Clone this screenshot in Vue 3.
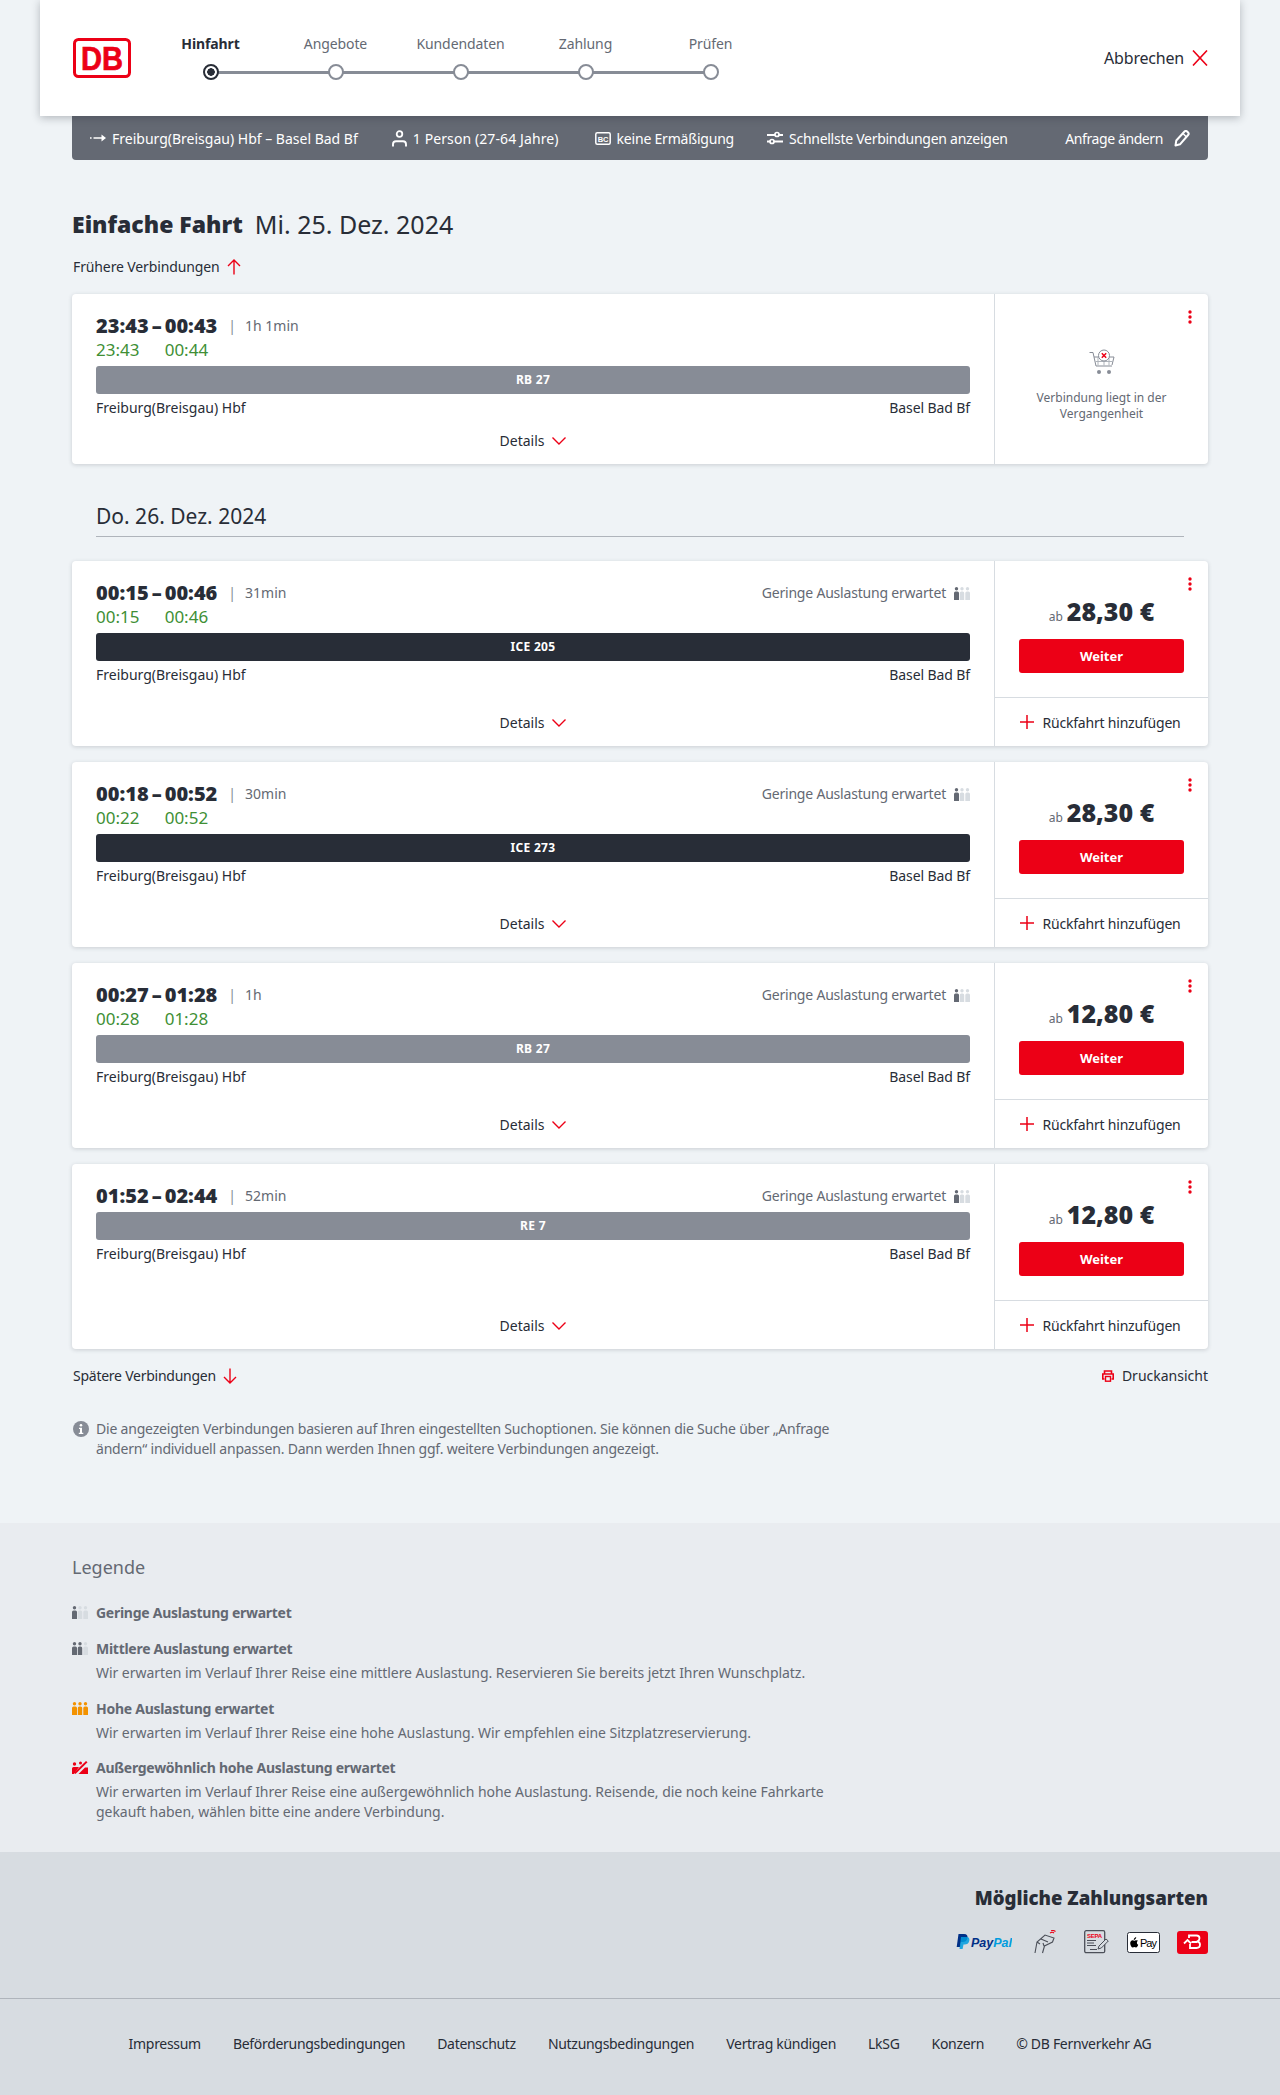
<script setup>
const steps = ['Hinfahrt', 'Angebote', 'Kundendaten', 'Zahlung', 'Prüfen']
const journeys = [
  { dep: '00:15', arr: '00:46', dur: '31min', rtDep: '00:15', rtArr: '00:46', train: 'ICE 205', dark: true, price: '28,30 €' },
  { dep: '00:18', arr: '00:52', dur: '30min', rtDep: '00:22', rtArr: '00:52', train: 'ICE 273', dark: true, price: '28,30 €' },
  { dep: '00:27', arr: '01:28', dur: '1h', rtDep: '00:28', rtArr: '01:28', train: 'RB 27', dark: false, price: '12,80 €' },
  { dep: '01:52', arr: '02:44', dur: '52min', train: 'RE 7', dark: false, price: '12,80 €' }
]
const legend = [
  { title: 'Mittlere Auslastung erwartet', level: 2, text: ['Wir erwarten im Verlauf Ihrer Reise eine mittlere Auslastung. Reservieren Sie bereits jetzt Ihren Wunschplatz.'] },
  { title: 'Hohe Auslastung erwartet', level: 3, text: ['Wir erwarten im Verlauf Ihrer Reise eine hohe Auslastung. Wir empfehlen eine Sitzplatzreservierung.'] }
]
const links = ['Impressum', 'Beförderungsbedingungen', 'Datenschutz', 'Nutzungsbedingungen', 'Vertrag kündigen', 'LkSG', 'Konzern', '© DB Fernverkehr AG']
</script>

<template>
  <div class="page">
    <header class="top">
      <svg class="logo" width="58" height="40" viewBox="0 0 58 40">
        <rect x="1.500" y="1.500" width="55" height="37" rx="4" fill="#fff" stroke="#ec0016" stroke-width="3" />
        <text x="8" y="31.500" font-family="Liberation Sans, sans-serif" font-weight="700" font-size="34" fill="#ec0016" stroke="#ec0016" stroke-width=".7" textLength="42" lengthAdjust="spacingAndGlyphs">DB</text>
      </svg>
      <ol class="steps">
        <li v-for="(s, i) in steps" :key="s" class="step" :class="{ active: i === 0 }">
          <span class="step-label">{{ s }}</span>
          <span class="dot"></span>
        </li>
      </ol>
      <a class="cancel">
        <span>Abbrechen</span>
        <svg width="16" height="16" viewBox="0 0 16 16"><path d="M1 0.500 15 15.500M15 0.500 1 15.500" stroke="#ec0016" stroke-width="1.600" fill="none" /></svg>
      </a>
    </header>

    <div class="summary">
      <span class="s-item s-route">
        <svg width="16" height="10" viewBox="0 0 16 10"><path d="M0 5h1.600M3.500 5h9" stroke="#fff" stroke-width="1.600" fill="none" /><path d="M11.500 1.500 16 5l-4.500 3.500z" fill="#fff" /></svg>
        Freiburg(Breisgau) Hbf – Basel Bad Bf
      </span>
      <span class="s-item s-person">
        <svg width="15" height="17" viewBox="0 0 15 17"><circle cx="7.500" cy="4" r="2.800" fill="none" stroke="#fff" stroke-width="1.800" /><path d="M1 16.500v-2.200c0-2 1.400-3 3-3h7c1.600 0 3 1 3 3v2.200" fill="none" stroke="#fff" stroke-width="1.900" /></svg>
        1 Person (27-64 Jahre)
      </span>
      <span class="s-item s-card">
        <svg width="16" height="13" viewBox="0 0 16 13"><rect x="0.800" y="0.800" width="14.400" height="11.400" rx="1.500" fill="none" stroke="#fff" stroke-width="1.500" /><text x="8" y="9.600" text-anchor="middle" font-family="Liberation Sans, sans-serif" font-size="7.500" font-weight="700" fill="#fff">BC</text></svg>
        keine Ermäßigung
      </span>
      <span class="s-item s-filter">
        <svg width="16" height="14" viewBox="0 0 16 14"><path d="M0 4h8M12 4h4M0 10.500h3M7 10.500h9" stroke="#fff" stroke-width="1.800" fill="none" /><circle cx="10" cy="3.500" r="2" fill="none" stroke="#fff" stroke-width="1.700" /><circle cx="5" cy="10.500" r="2" fill="none" stroke="#fff" stroke-width="1.700" /></svg>
        Schnellste Verbindungen anzeigen
      </span>
      <span class="s-item s-edit">
        Anfrage ändern
        <svg width="16" height="17" viewBox="0 0 16 17"><path d="M1.500 15.500 2.300 10.500 10.500 1.500a1.800 1.800 0 0 1 2.600 0l1 1a1.800 1.800 0 0 1 0 2.500L6 14.300z" fill="none" stroke="#fff" stroke-width="2" stroke-linejoin="round" /><path d="M9 3.500 12.500 7" stroke="#fff" stroke-width="1.500" /></svg>
      </span>
    </div>

    <main class="main">
      <h1 class="title"><strong>Einfache Fahrt</strong><span>Mi. 25. Dez. 2024</span></h1>
      <a class="more first">
        <span class="more-up">Frühere Verbindungen</span>
        <svg width="14" height="16" viewBox="0 0 14 16"><path d="M7 15.500V1M1 7l6-6 6 6" fill="none" stroke="#ec0016" stroke-width="1.400" /></svg>
      </a>

      <article class="card">
        <div class="left">
          <div class="times">
            <b class="t">23:43</b><b class="t dash">–</b><b class="t">00:43</b>
            <span class="dur"><i class="bar-sep">|</i>1h 1min</span>
            <span></span>
            <span class="rt">23:43</span><span></span><span class="rt">00:44</span>
          </div>
          <div class="train">RB 27</div>
          <div class="stations"><span>Freiburg(Breisgau) Hbf</span><span>Basel Bad Bf</span></div>
          <a class="details">Details
            <svg width="14" height="8" viewBox="0 0 14 8"><path d="M0.500 0.500 7 7l6.500-6.500" fill="none" stroke="#ec0016" stroke-width="1.400" /></svg>
          </a>
        </div>
        <div class="right past">
          <svg class="menu" width="4" height="14" viewBox="0 0 4 14"><circle cx="2" cy="2" r="1.700" fill="#ec0016" /><circle cx="2" cy="7" r="1.700" fill="#ec0016" /><circle cx="2" cy="12" r="1.700" fill="#ec0016" /></svg>
          <svg width="26" height="26" viewBox="0 0 26 26">
            <path d="M0.500 3.500h3.500l3 13.500h16M5 8h20l-2 8" fill="none" stroke="#878c96" stroke-width="1" />
            <path d="M6.500 12.500h17M9 8v8.500M15 8v8.500M20 8v8.500" fill="none" stroke="#afb4bb" stroke-width="1" />
            <circle cx="15" cy="6.500" r="5.500" fill="#fff" stroke="#878c96" stroke-width="1" />
            <path d="M12.800 4.300 17.200 8.700M17.200 4.300 12.800 8.700" stroke="#ec0016" stroke-width="1.500" />
            <circle cx="10" cy="23" r="2" fill="#878c96" /><circle cx="20" cy="23" r="2" fill="#878c96" />
          </svg>
          <p class="past-text">Verbindung liegt in der Vergangenheit</p>
        </div>
      </article>

      <h2 class="day">Do. 26. Dez. 2024</h2>

      <div class="list">
        <article v-for="j in journeys" :key="j.train + j.dep" class="card">
          <div class="left">
            <div class="times">
              <b class="t">{{ j.dep }}</b><b class="t dash">–</b><b class="t">{{ j.arr }}</b>
              <span class="dur"><i class="bar-sep">|</i>{{ j.dur }}</span>
              <span class="occ">
                Geringe Auslastung erwartet
                <svg width="16" height="13" viewBox="0 0 16 13">
                  <g fill="#646973"><circle cx="2.500" cy="1.700" r="1.700" /><path d="M0 6a1.500 1.500 0 0 1 1.500-1.500h2A1.500 1.500 0 0 1 5 6v7H0z" /></g>
                  <g fill="#d7dce1"><circle cx="8" cy="1.700" r="1.700" /><path d="M5.800 6a1.500 1.500 0 0 1 1.500-1.500h1.400a1.500 1.500 0 0 1 1.500 1.500v7H5.800z" /><circle cx="13.500" cy="1.700" r="1.700" /><path d="M11.300 6a1.500 1.500 0 0 1 1.500-1.500h1.700A1.500 1.500 0 0 1 16 6v7h-4.700z" /></g>
                </svg>
              </span>
              <template v-if="j.rtDep">
                <span class="rt">{{ j.rtDep }}</span><span></span><span class="rt">{{ j.rtArr }}</span>
              </template>
            </div>
            <div class="train" :class="{ dark: j.dark }">{{ j.train }}</div>
            <div class="stations"><span>Freiburg(Breisgau) Hbf</span><span>Basel Bad Bf</span></div>
            <a class="details">Details
              <svg width="14" height="8" viewBox="0 0 14 8"><path d="M0.500 0.500 7 7l6.500-6.500" fill="none" stroke="#ec0016" stroke-width="1.400" /></svg>
            </a>
          </div>
          <div class="right">
            <svg class="menu" width="4" height="14" viewBox="0 0 4 14"><circle cx="2" cy="2" r="1.700" fill="#ec0016" /><circle cx="2" cy="7" r="1.700" fill="#ec0016" /><circle cx="2" cy="12" r="1.700" fill="#ec0016" /></svg>
            <div class="buy">
              <div class="price"><small>ab</small><strong>{{ j.price }}</strong></div>
              <button class="btn">Weiter</button>
            </div>
            <a class="return">
              <svg width="14" height="14" viewBox="0 0 14 14"><path d="M7 0v14M0 7h14" stroke="#ec0016" stroke-width="1.500" /></svg>
              Rückfahrt hinzufügen
            </a>
          </div>
        </article>
      </div>

      <div class="after">
        <a class="more">
          <span class="more-down">Spätere Verbindungen</span>
          <svg width="14" height="16" viewBox="0 0 14 16"><path d="M7 0.500V15M1 9l6 6 6-6" fill="none" stroke="#ec0016" stroke-width="1.400" /></svg>
        </a>
        <a class="print">
          <svg width="12" height="12" viewBox="0 0 12 12"><path d="M2.500 4V1h7v3M2.500 9H0.800V4h10.400v5H9.500" fill="none" stroke="#ec0016" stroke-width="1.600" /><rect x="3.500" y="6.500" width="5" height="4.700" fill="none" stroke="#ec0016" stroke-width="1.400" /></svg>
          Druckansicht
        </a>
      </div>

      <div class="info">
        <svg width="16" height="16" viewBox="0 0 16 16"><circle cx="8" cy="8" r="8" fill="#878c96" /><circle cx="8" cy="4.200" r="1.300" fill="#fff" /><path d="M6 6.800h3v5h1.300v1.300H5.800v-1.300H7V8H6z" fill="#fff" /></svg>
        <p>Die angezeigten Verbindungen basieren auf Ihren eingestellten Suchoptionen. Sie können die Suche über „Anfrage ändern“ individuell anpassen. Dann werden Ihnen ggf. weitere Verbindungen angezeigt.</p>
      </div>
    </main>

    <section class="legend">
      <h3>Legende</h3>
      <div class="l-row l-first">
        <svg width="16" height="13" viewBox="0 0 16 13">
          <g fill="#646973"><circle cx="2.500" cy="1.700" r="1.700" /><path d="M0 6a1.500 1.500 0 0 1 1.500-1.500h2A1.500 1.500 0 0 1 5 6v7H0z" /></g>
          <g fill="#d7dce1"><circle cx="8" cy="1.700" r="1.700" /><path d="M5.800 6a1.500 1.500 0 0 1 1.500-1.500h1.400a1.500 1.500 0 0 1 1.500 1.500v7H5.800z" /><circle cx="13.500" cy="1.700" r="1.700" /><path d="M11.300 6a1.500 1.500 0 0 1 1.500-1.500h1.700A1.500 1.500 0 0 1 16 6v7h-4.700z" /></g>
        </svg>
        <div><b>Geringe Auslastung erwartet</b></div>
      </div>
      <div v-for="l in legend" :key="l.title" class="l-row">
        <svg width="16" height="13" viewBox="0 0 16 13">
          <g :fill="l.level === 3 ? '#f39200' : '#646973'"><circle cx="2.500" cy="1.700" r="1.700" /><path d="M0 6a1.500 1.500 0 0 1 1.500-1.500h2A1.500 1.500 0 0 1 5 6v7H0z" /><circle cx="8" cy="1.700" r="1.700" /><path d="M5.800 6a1.500 1.500 0 0 1 1.500-1.500h1.400a1.500 1.500 0 0 1 1.500 1.500v7H5.800z" /></g>
          <g :fill="l.level === 3 ? '#f39200' : '#d7dce1'"><circle cx="13.500" cy="1.700" r="1.700" /><path d="M11.300 6a1.500 1.500 0 0 1 1.500-1.500h1.700A1.500 1.500 0 0 1 16 6v7h-4.700z" /></g>
        </svg>
        <div><b>{{ l.title }}</b><p v-for="t in l.text" :key="t">{{ t }}</p></div>
      </div>
      <div class="l-row l-last">
        <svg width="16" height="13" viewBox="0 0 16 13">
          <g fill="#ec0016"><circle cx="2.500" cy="3" r="1.700" /><path d="M0 13V7.500A1.500 1.500 0 0 1 1.500 6H7L2 13z" /><path d="M14 0 15.500 1.300 3.500 13 2 11.800z" /><circle cx="8.500" cy="2" r="1.500" /><path d="M16 13H6.500L13 6.500 16 6.500z" /></g>
        </svg>
        <div><b>Außergewöhnlich hohe Auslastung erwartet</b><p class="wide">Wir erwarten im Verlauf Ihrer Reise eine außergewöhnlich hohe Auslastung. Reisende, die noch keine Fahrkarte gekauft haben, wählen bitte eine andere Verbindung.</p></div>
      </div>
    </section>

    <footer class="foot">
      <div class="pay">
        <h3>Mögliche Zahlungsarten</h3>
        <div class="pay-icons">
          <svg class="paypal" width="56" height="18" viewBox="0 0 56 18">
            <path d="M2.500 1h5.500c3 0 4 1.800 3.400 4.200-.6 2.700-2.500 3.800-5 3.800H5l-.9 5H0.700z" fill="#003087" />
            <path d="M5 4h5.500c2.500 0 3.300 1.600 2.800 3.800-.6 2.700-2.300 3.800-4.800 3.800H7.500L6.600 16H3.500z" fill="#009cde" opacity=".85" />
            <text x="15" y="13.500" font-family="Liberation Sans, sans-serif" font-weight="700" font-style="italic" font-size="13" fill="#003087" textLength="41" lengthAdjust="spacingAndGlyphs">Pay<tspan fill="#009cde">Pal</tspan></text>
          </svg>
          <svg class="nfc" width="22" height="24" viewBox="0 0 22 24">
            <path d="M1 23 3 12 11 5 20 8l-1.500 4-8 4-2 7M3 12l3 2M7 9l7 3M10 16l-1-3" fill="none" stroke="#4b4f58" stroke-width="1.100" />
            <path d="M16 3c1.500-1 3-1 4 0M17 0.800c1.500-.5 3-.4 4.500.7" fill="none" stroke="#ec0016" stroke-width="1.100" />
          </svg>
          <svg class="sepa" width="25" height="24" viewBox="0 0 25 24">
            <rect x="0.700" y="0.700" width="20" height="22" rx="1.500" fill="none" stroke="#4b4f58" stroke-width="1.300" />
            <text x="3" y="7.500" font-family="Liberation Sans, sans-serif" font-weight="700" font-size="6" fill="#ec0016" textLength="15">SEPA</text>
            <path d="M3 10.500h9M3 13h7M3 15.500h9M6 19.500h7" stroke="#4b4f58" stroke-width="1" />
            <path d="M14 19l1-3 7-7 2.300 2-7 7z" fill="#d7dce1" stroke="#4b4f58" stroke-width="1" />
          </svg>
          <svg class="apple" width="33" height="21" viewBox="0 0 33 21">
            <rect x="0.500" y="0.500" width="32" height="20" rx="2" fill="#fff" stroke="#282d37" />
            <path d="M8.200 7.300c.5-.6 1-1 1-2-.8 0-1.500.5-1.900 1-.4.500-.6 1-.5 1.700.7 0 1-.2 1.400-.7zM9.300 8.200c-.9 0-1.300.5-1.900.5s-1.100-.5-1.800-.5c-1.400 0-2.400 1.400-2.400 3 0 2 1.500 4.300 2.600 4.300.6 0 .9-.4 1.600-.4s1 .4 1.600.4c1 0 1.900-1.600 2.200-2.700-1.700-.7-1.800-3.200-.1-4-.4-.4-1.100-.6-1.800-.6z" fill="#000" />
            <text x="13" y="15" font-family="Liberation Sans, sans-serif" font-size="11" fill="#000" textLength="17">Pay</text>
          </svg>
          <svg class="bahn" width="31" height="23" viewBox="0 0 31 23">
            <rect width="31" height="23" rx="3" fill="#ec0016" />
            <path d="M12 7V4.500h7.500c2 0 3 1.200 3 2.800 0 1.500-.8 2.500-2 3 1.500.5 2.500 1.600 2.500 3.300 0 2.200-1.500 3.400-3.500 3.400H13v-4" fill="none" stroke="#fff" stroke-width="1.800" />
            <path d="M14.500 11h6M7 12.500l3.500-3.500 3.500 3.500" fill="none" stroke="#fff" stroke-width="1.800" />
          </svg>
        </div>
      </div>
      <nav class="links"><a v-for="l in links" :key="l">{{ l }}</a></nav>
    </footer>
  </div>
</template>

<style scoped>
.page { width: 1280px; min-height: 2095px; background: #eff3f6; color: #282d37; font-family: "Noto Sans", sans-serif; font-size: 14px; display: flex; flex-direction: column; }
a { color: inherit; }
p, h1, h2, h3, ol { margin: 0; padding: 0; }
i { font-style: normal; }

.top { position: relative; z-index: 2; width: 1200px; height: 116px; margin: 0 auto; background: #fff; box-shadow: 0 2px 8px rgba(40, 45, 55, .3); display: flex; align-items: center; padding: 0 32px 0 33px; box-sizing: border-box; }
.logo { flex: none; }
.steps { list-style: none; display: flex; margin-left: 17px; }
.step { width: 125px; display: flex; flex-direction: column; align-items: center; position: relative; color: #646973; line-height: 20px; margin-top: -2px; }
.step.active { color: #282d37; font-weight: 700; }
.step-label { height: 20px; letter-spacing: -.1px; }
.dot { width: 16px; height: 16px; margin-top: 10px; box-sizing: border-box; border: 2px solid #878c96; border-radius: 50%; background: #fff; position: relative; z-index: 1; }
.step:not(:last-child)::after { content: ""; position: absolute; left: 50%; width: 125px; top: 37px; height: 3px; background: #878c96; }
.active .dot { border-color: #282d37; background: radial-gradient(circle, #282d37 0 3.500px, #fff 4px); }
.cancel { margin-left: auto; display: flex; align-items: center; gap: 8px; font-size: 16px; letter-spacing: -.2px; }

.summary { width: 1136px; height: 44px; margin: 0 auto; box-sizing: border-box; background: #646973; color: #fff; border-radius: 0 0 4px 4px; display: flex; align-items: center; padding: 0 18px; }
.s-item { display: flex; align-items: center; gap: 6px; white-space: nowrap; }
.s-person { margin-left: 34px; letter-spacing: .1px; }
.s-card { margin-left: 36px; letter-spacing: -.2px; }
.s-filter { margin-left: 33px; letter-spacing: -.27px; }
.s-edit { margin-left: auto; gap: 11px; letter-spacing: -.4px; }

.main { width: 1136px; margin: 0 auto; padding: 48px 0 64px; }
.title { display: flex; gap: 12px; font-size: 25px; line-height: 32px; font-weight: 400; }
.title strong { font-weight: 900; font-size: 23px; }
.more { display: flex; align-items: center; gap: 7px; line-height: 24px; padding-left: 1px; }
.more-up { letter-spacing: -.12px; }
.more-down { letter-spacing: -.25px; }
.first { margin-top: 15px; margin-bottom: 15px; }
.card { position: relative; display: flex; background: #fff; border-radius: 4px; box-shadow: 0 1px 4px rgba(40, 45, 55, .18); min-height: 170px; }
.left { width: 922px; box-sizing: border-box; padding: 20px 24px 11px; display: flex; flex-direction: column; }
.times { display: grid; grid-template-columns: auto auto auto 1fr auto; justify-content: start; line-height: 24px; }
.t { font-weight: 900; font-size: 20px; }
.dash { padding: 0 3px; }
.dur { color: #646973; font-size: 14px; }
.bar-sep { color: #878c96; margin: 0 9px 0 11px; }
.occ { color: #646973; display: flex; align-items: center; gap: 8px; letter-spacing: -.2px; }
.rt { color: #408f35; font-size: 17px; }
.train { height: 28px; box-sizing: border-box; padding-bottom: 2px; margin-top: 4px; background: #878c96; color: #fff; border-radius: 3px; display: flex; align-items: center; justify-content: center; font-size: 12px; font-weight: 700; letter-spacing: .3px; }
.train.dark { background: #282d37; }
.stations { display: flex; justify-content: space-between; margin-top: 4px; line-height: 20px; }
.stations span:last-child { letter-spacing: -.1px; }
.details { margin-top: auto; align-self: center; display: flex; align-items: center; gap: 8px; line-height: 24px; }
.right { position: relative; flex: 1; border-left: 1px solid #d7dce1; display: flex; flex-direction: column; }
.menu { position: absolute; top: 16px; right: 16px; }
.past { align-items: center; padding-top: 55px; box-sizing: border-box; }
.past-text { margin-top: 15px; width: 150px; text-align: center; font-size: 12px; line-height: 16px; color: #646973; }
.buy { box-sizing: border-box; padding: 34px 24px 0; border-bottom: 1px solid #d7dce1; height: 137px; }
.price { display: flex; align-items: baseline; justify-content: center; gap: 4px; height: 32px; line-height: 32px; }
.price small { font-size: 12px; color: #646973; }
.price strong { font-weight: 900; font-size: 25px; }
.btn { display: block; width: 165px; height: 34px; margin-top: 12px; border: 0; border-radius: 3px; background: #ec0016; color: #fff; font: 700 13px "Noto Sans", sans-serif; }
.return { height: 48px; box-sizing: border-box; padding-right: 2px; display: flex; align-items: center; justify-content: center; gap: 8px; white-space: nowrap; letter-spacing: -.2px; }

.day { margin: 37px 24px 24px; padding-bottom: 5px; border-bottom: 1px solid #afb4bb; font-size: 21px; line-height: 30px; font-weight: 400; }
.list { display: flex; flex-direction: column; gap: 16px; }
.list .card { height: 185px; }
.after { display: flex; justify-content: space-between; margin-top: 15px; line-height: 24px; }
.print { display: flex; align-items: center; gap: 8px; }
.info { display: flex; gap: 7px; margin-top: 31px; padding-left: 1px; width: 800px; line-height: 20px; color: #646973; letter-spacing: -.2px; }
.info svg { flex: none; margin-top: 2px; }

.legend { background: #e9ecf0; padding: 32px 72px 30px; height: 329px; box-sizing: border-box; color: #646973; }
.legend h3 { font-size: 18px; line-height: 24px; font-weight: 400; }
.l-row { display: flex; gap: 8px; margin-top: 16px; line-height: 20px; }
.l-row svg { flex: none; margin-top: 3px; }
.l-row b { font-weight: 700; letter-spacing: -.27px; }
.l-row p { margin-top: 4px; letter-spacing: -.05px; }
.l-first { margin-top: 24px; }
.l-last { margin-top: 15px; }
.wide { width: 760px; }

.foot { background: #d7dce1; flex: 1; }
.pay { height: 147px; box-sizing: border-box; padding: 32px 72px 0; border-bottom: 1px solid #afb4bb; display: flex; flex-direction: column; align-items: flex-end; }
.pay h3 { font-weight: 900; font-size: 18.600px; line-height: 28px; }
.pay-icons { display: flex; align-items: center; height: 24px; margin-top: 18px; }
.nfc { margin-left: 22px; }
.sepa { margin-left: 28px; }
.apple { margin-left: 18px; }
.bahn { margin-left: 17px; }
.links { display: flex; justify-content: center; gap: 32px; padding-top: 35px; line-height: 20px; letter-spacing: -.3px; }
</style>
